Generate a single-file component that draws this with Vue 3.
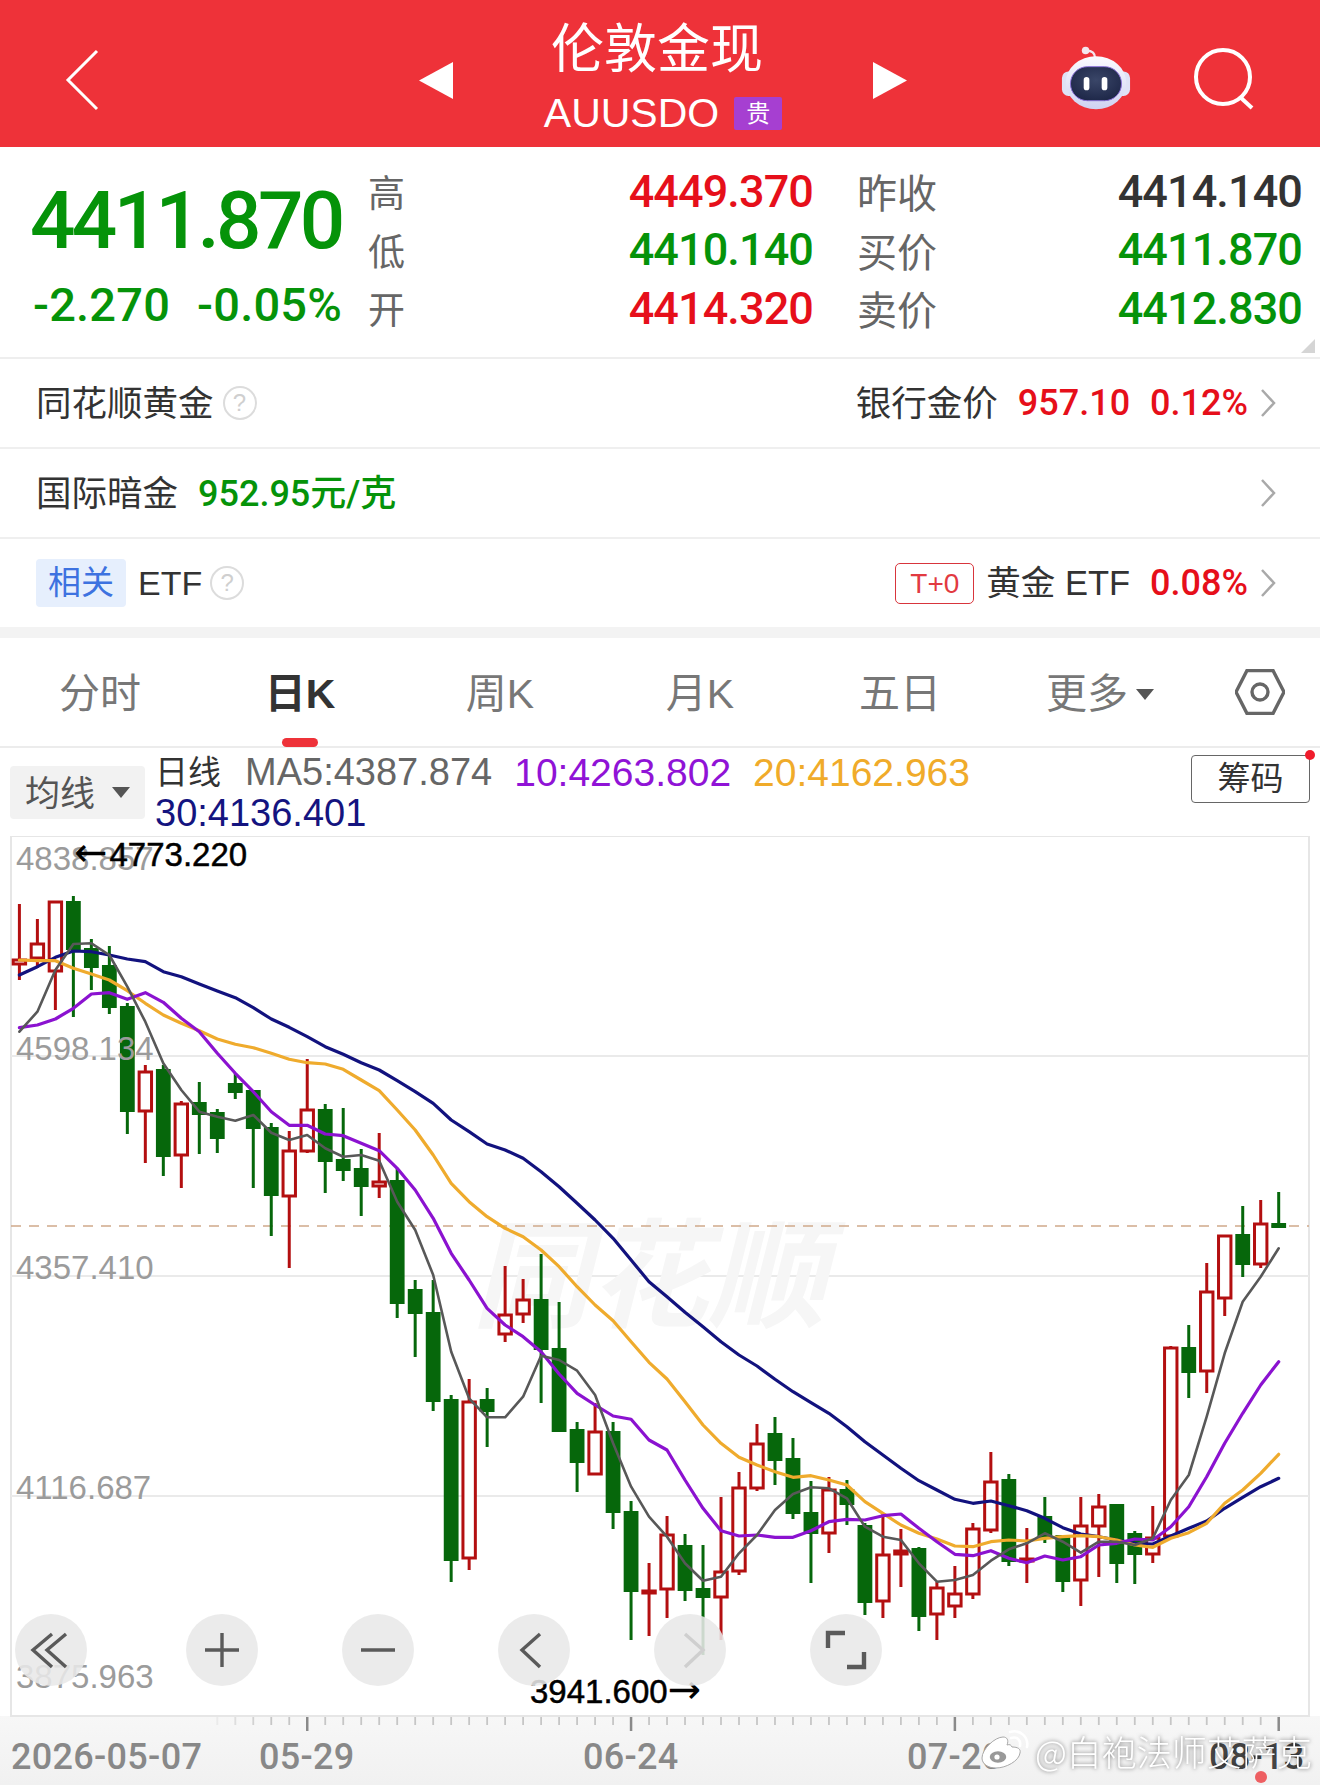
<script setup>
const X = i => 19.4 + i * 17.99
const r = 'r', g = 'g'
// [colour, high, bodyTop, bodyBottom, low]
const raw = [
  [r,904,959,965,980],[r,919,943,959,968],[r,901,901,972,1010],[g,896,901,950,1017],[g,939,948,968,990],[g,946,965,1008,1014],
  [g,1003,1006,1112,1134],[r,1065,1071,1112,1163],[g,1065,1069,1157,1176],[r,1101,1103,1156,1188],[g,1082,1102,1115,1154],[g,1109,1112,1139,1153],
  [g,1073,1083,1093,1099],[g,1090,1090,1129,1188],[g,1123,1127,1196,1236],[r,1131,1150,1197,1268],[r,1059,1109,1152,1153],[g,1104,1109,1162,1193],
  [g,1108,1159,1171,1181],[g,1149,1168,1187,1216],[r,1133,1181,1187,1198],[g,1168,1180,1304,1318],[g,1280,1289,1314,1357],[g,1280,1312,1402,1411],
  [g,1395,1399,1561,1582],[r,1379,1401,1559,1570],[g,1388,1399,1412,1447],[r,1266,1314,1335,1342],[r,1279,1299,1315,1323],[g,1254,1299,1350,1403],
  [g,1302,1348,1432,1432],[g,1422,1429,1463,1492],[r,1403,1431,1475,1475],[g,1422,1431,1513,1529],[g,1501,1511,1592,1640],[r,1563,1590,1593,1636],
  [r,1516,1534,1590,1618],[g,1534,1545,1591,1601],[g,1545,1588,1598,1655],[r,1497,1571,1598,1640],[r,1472,1487,1572,1575],[r,1424,1443,1489,1491],
  [g,1417,1433,1461,1485],[g,1438,1458,1514,1519],[g,1481,1512,1534,1583],[r,1477,1489,1534,1553],[g,1480,1489,1505,1525],[g,1523,1525,1603,1615],
  [r,1513,1554,1602,1618],[r,1529,1550,1555,1587],[g,1547,1548,1617,1631],[r,1582,1587,1615,1640],[r,1566,1593,1607,1618],[r,1523,1528,1595,1599],
  [r,1452,1481,1531,1533],[g,1474,1479,1562,1566],[r,1528,1558,1561,1583],[g,1497,1516,1538,1543],[g,1535,1535,1582,1592],[r,1497,1525,1581,1606],
  [r,1494,1506,1527,1577],[g,1504,1504,1564,1583],[g,1531,1533,1555,1584],[r,1506,1537,1555,1563],[r,1346,1347,1537,1537],[g,1325,1347,1373,1398],
  [r,1263,1291,1372,1393],[r,1235,1235,1299,1316],[g,1206,1234,1265,1277],[r,1200,1223,1265,1268],[g,1192,1223,1228,1228]
]
const candles = raw.map((c, i) => ({ x: X(i), up: c[0] === r, high: c[1], top: c[2], bottom: c[3], low: c[4] }))

const toPts = arr => arr.map((y, i) => `${X(i).toFixed(1)},${y.toFixed(1)}`).join(' ')
const z3 = a => a.map(v => 840 + v / 3)
const z5 = a => a.map(v => 1300 + v / 3)
const z4 = a => a.map(v => 1140 + v / 3)

const ma5 = toPts([
  ...z3([575,515,390,312,310,345,440,545,670,750,815,830,842,825,878,900,885,925,950,945,962,1085,1170,1305]),
  ...z5([155,295,352,352,290,167,180,212,285,430,560,650]),
  ...z4([1190,1270,1322,1310,1240,1185,1110,1062,1042,1045,1075,1160,1190,1200,1270,1325,1320,1305,1262,1228,1210,1180,1205,1238,1205,1205,1215,1195,1080,1005,830,640,485,410,325])
])
const ma10 = toPts([
  ...z3([563,555,537,505,462,458,478,458,487,535,575,640,700,755,815,856,856,882,887,910,932,985,1050,1135,1240,1320,1405]),
  ...z5([75,110,155,222,280,315,348,358,420]),
  ...z4([930,1020,1105,1172,1188,1185,1192,1192,1172,1145,1138,1140,1127,1122,1165,1205,1243,1247,1232,1255,1268,1248,1260,1250,1215,1210,1197,1200,1160,1100,1010,910,820,735,665])
])
const ma20 = toPts([
  ...z3([360,362,362,385,402,420,452,490,525,550,572,597,613,623,640,658,668,672,688,720,752,810,870,945,1030,1085,1130,1165,1190,1230,1280,1340,1395]),
  ...z5([62,125,187]),
  ...z4([717,785,855,910,952,975,995,1012,1007,1020,1035,1085,1120,1155,1180,1197,1218,1220,1205,1200,1203,1195,1190,1187,1190,1200,1215,1222,1195,1178,1150,1090,1050,1000,943])
])
const ma30 = toPts([
  ...z3([405,380,352,333,335,345,357,365,395,410,432,453,473,503,537,562,590,620,643,668,690,722,755,790,840,875,912,930,955,995,1040,1090,1140,1195,1260,1325]),
  ...z4([470,517,560,605,645,678,718,755,788,820,860,905,945,985,1022,1050,1078,1090,1083,1097,1112,1135,1163,1182,1190,1200,1210,1212,1188,1165,1143,1105,1072,1040,1015])
])

const axisY = [
  { t: '4838.857', y: 870 },
  { t: '4598.134', y: 1060 },
  { t: '4357.410', y: 1279 },
  { t: '4116.687', y: 1499 },
  { t: '3875.963', y: 1688 }
]
const gridY = [1056, 1276, 1496]
const ticks = raw.map((c, i) => ({ x: X(i), big: i % 18 === 16, o: i < 11 ? 0 : i < 14 ? (i - 10) / 4 : 1 }))
const rounds = [51, 222, 378, 534, 690, 846]
const tabs = ['分时', '日K', '周K', '月K', '五日']
</script>

<template>
  <div class="page">
    <header class="hdr">
      <svg class="back" viewBox="0 0 34 62"><polyline points="32,2 3,31 32,60" /></svg>
      <svg class="tri tri-l" viewBox="0 0 34 37"><polygon points="34,0 34,37 0,18.5" /></svg>
      <div class="title">
        <div class="name">伦敦金现</div>
        <div class="sub"><span>AUUSDO</span><em>贵</em></div>
      </div>
      <svg class="tri" viewBox="0 0 34 37"><polygon points="0,0 0,37 34,18.5" /></svg>
      <svg class="robot" viewBox="0 0 74 66">
        <defs>
          <linearGradient id="rb" x1="0" y1="0" x2="0" y2="1">
            <stop offset="0" stop-color="#fbfbff" /><stop offset="1" stop-color="#cfd2f2" />
          </linearGradient>
          <radialGradient id="rf" cx=".5" cy=".4" r=".7">
            <stop offset="0" stop-color="#3a4668" /><stop offset="1" stop-color="#1a2344" />
          </radialGradient>
        </defs>
        <path class="ant" d="M36 12 C36 6 33 4 27 4" />
        <circle cx="26" cy="4" r="4" fill="#f4e6ee" />
        <rect x="1" y="26" width="72" height="26" rx="7" fill="#dfe2f6" />
        <ellipse cx="37" cy="38" rx="32" ry="28" fill="url(#rb)" />
        <rect x="10" y="21" width="54" height="36" rx="18" fill="url(#rf)" stroke="#8a6fd8" stroke-width="1" />
        <rect x="24" y="32" width="6" height="14" rx="3" fill="#fff" />
        <rect x="43" y="32" width="6" height="14" rx="3" fill="#fff" />
      </svg>
      <svg class="search" viewBox="0 0 64 64"><circle cx="30" cy="30" r="27" /><line x1="47" y1="50" x2="59" y2="61" /></svg>
    </header>

    <section class="quote">
      <div class="q-left">
        <div class="price">4411.870</div>
        <div class="chg"><span>-2.270</span><span>-0.05%</span></div>
      </div>
      <div class="q-grid">
        <span class="lb">高</span><span class="v red">4449.370</span><span class="lb lb2">昨收</span><span class="v dark">4414.140</span>
        <span class="lb">低</span><span class="v green">4410.140</span><span class="lb lb2">买价</span><span class="v green">4411.870</span>
        <span class="lb">开</span><span class="v red">4414.320</span><span class="lb lb2">卖价</span><span class="v green">4412.830</span>
      </div>
      <i class="corner"></i>
    </section>

    <div class="row">
      <span class="cn">同花顺黄金</span><b class="q">?</b>
      <span class="right cn">银行金价</span><span class="num red n1">957.10</span><span class="num red n2">0.12%</span>
      <svg class="chev" viewBox="0 0 16 30"><polyline points="2,2 14,15 2,28" /></svg>
    </div>
    <div class="row">
      <span class="cn">国际暗金</span><span class="num green n3">952.95元/克</span>
      <svg class="chev right" viewBox="0 0 16 30"><polyline points="2,2 14,15 2,28" /></svg>
    </div>
    <div class="row last">
      <span class="tag">相关</span><span class="etf">ETF</span><b class="q q2">?</b>
      <span class="right t0">T+0</span><span class="gold cn">黄金 ETF</span><span class="num red n2 n4">0.08%</span>
      <svg class="chev" viewBox="0 0 16 30"><polyline points="2,2 14,15 2,28" /></svg>
    </div>
    <div class="band"></div>

    <nav class="tabs">
      <span v-for="(t, i) in tabs" :key="t" class="tab" :class="{ active: i === 1 }">{{ t }}</span>
      <span class="tab">更多<i class="more"></i></span>
      <span class="gear">
        <svg viewBox="0 0 50 46"><polygon points="12,1.5 38,1.5 49,23 38,44.5 12,44.5 1,23" /><circle cx="25" cy="23" r="8" /></svg>
      </span>
    </nav>

    <div class="info">
      <div class="ma-btn">均线<i></i></div>
      <div class="ma-text">
        <span class="t1">日线</span>
        <span class="c5">MA5:4387.874</span>
        <span class="c10">10:4263.802</span>
        <span class="c20">20:4162.963</span>
        <span class="c30">30:4136.401</span>
      </div>
      <div class="chip">筹码<i></i></div>
    </div>

    <svg class="chart" viewBox="0 836 1320 949">
      <defs>
        <linearGradient id="axbg" x1="0" y1="0" x2="0" y2="1">
          <stop offset="0" stop-color="#f7f7f7" /><stop offset="1" stop-color="#f1f1f1" />
        </linearGradient>
      </defs>
      <rect x="0" y="1716" width="1320" height="69" fill="url(#axbg)" />
      <rect x="11" y="836" width="1298" height="880" fill="#fff" stroke="#e6e6e6" stroke-width="2" />
      <line v-for="y in gridY" :key="y" x1="11" x2="1309" :y1="y" :y2="y" stroke="#eaeaea" stroke-width="2" />
      <text x="472" y="1318" class="wm">同花顺</text>
      <line x1="11" x2="1309" y1="1226" y2="1226" stroke="#cfa98a" stroke-width="1.5" stroke-dasharray="10 8" />

      <g v-for="(c, i) in candles" :key="i">
        <line :x1="c.x" :x2="c.x" :y1="c.high" :y2="c.low" :stroke="c.up ? '#b30f10' : '#06670b'" stroke-width="3" />
        <rect v-if="c.up" :x="c.x - 6.2" :y="c.top + 1" width="12.4" :height="Math.max(c.bottom - c.top - 2, 2)" fill="#fff" stroke="#b30f10" stroke-width="3" />
        <rect v-else :x="c.x - 7.4" :y="c.top" width="14.8" :height="Math.max(c.bottom - c.top, 3)" fill="#06670b" />
      </g>

      <polyline :points="ma30" class="ln" stroke="#12127e" stroke-width="3.2" />
      <polyline :points="ma20" class="ln" stroke="#efab2d" stroke-width="3.2" />
      <polyline :points="ma10" class="ln" stroke="#8b12d0" stroke-width="3.2" />
      <polyline :points="ma5" class="ln" stroke="#585858" stroke-width="2.6" />

      <text v-for="a in axisY" :key="a.t" x="16" :y="a.y" class="axis">{{ a.t }}</text>
      <text x="74" y="866" class="flag"><tspan class="arrow">←</tspan><tspan dx="2">4773.220</tspan></text>
      <text x="530" y="1703" class="flag">3941.600<tspan class="arrow">→</tspan></text>

      <circle v-for="x in rounds" :key="x" :cx="x" cy="1650" r="36" fill="#e8e8e8" fill-opacity=".88" />
      <g class="ic">
        <polyline points="52,1634 33,1650 52,1667" /><polyline points="66,1634 47,1650 66,1667" />
        <path d="M205 1650H239M222 1633V1667" />
        <path d="M361 1650H395" />
        <polyline points="540,1634 522,1650 540,1667" />
        <polyline class="dim" points="685,1634 703,1650 685,1667" />
        <polyline class="thick" points="845,1633 828,1633 828,1648" />
        <polyline class="thick" points="847,1667 864,1667 864,1652" />
      </g>

      <line v-for="t in ticks" :key="t.x" :x1="t.x" :x2="t.x" y1="1717" :y2="t.big ? 1731 : 1725"
        :stroke="t.big ? '#8a8a8a' : '#c6c6c6'" :stroke-opacity="t.o" :stroke-width="t.big ? 2.5 : 1.8" />

      <text x="11" y="1769" class="date">2026-05-07</text>
      <text x="259" y="1769" class="date">05-29</text>
      <text x="583" y="1769" class="date">06-24</text>
      <text x="907" y="1769" class="date">07-20</text>
      <text x="1209" y="1769" class="date dk">08-13</text>
      <circle cx="1261" cy="1777" r="6" fill="#ee5f62" />

      <g class="weibo">
        <path d="M1012 1747c6 0 9 2 8 6-1 8-14 15-24 15-8 0-14-4-14-10 0-9 13-21 21-21 4 0 6 3 4 8 3-1 4 0 5 2z" fill="#fff" stroke="#a8a8a8" stroke-width="1" />
        <ellipse cx="998" cy="1757" rx="9" ry="6.5" fill="#999" stroke="#fff" stroke-width="1.5" />
        <circle cx="997" cy="1757" r="2.6" fill="#fff" />
        <path d="M1011 1738c6-2 10 2 9 8M1010 1732c10-3 19 5 17 15" fill="none" stroke="#fff" stroke-width="2.6" stroke-linecap="round" />
      </g>
      <text x="1035" y="1766" class="mark">@白袍法师艾萨克</text>
    </svg>
  </div>
</template>

<style>
html, body { margin: 0; background: #fff; }
</style>

<style scoped>
.page {
  width: 1320px;
  height: 1785px;
  overflow: hidden;
  background: #fff;
  font-family: "Liberation Sans", "Noto Sans CJK SC", sans-serif;
  color: #333;
}
.hdr {
  height: 147px;
  background: #ee3239;
  display: flex;
  align-items: center;
  color: #fff;
}
.back { width: 34px; height: 62px; margin: 12px 0 0 65px; }
.back polyline { fill: none; stroke: #fff; stroke-width: 3; }
.tri { width: 34px; height: 37px; fill: #fff; margin-top: 14px; }
.tri-l { margin-left: 320px; }
.title { width: 420px; display: flex; flex-direction: column; align-items: center; }
.name { font-size: 53px; line-height: 64px; font-weight: 400; padding-right: 12px; margin-top: 10px; }
.sub { display: flex; align-items: center; height: 52px; font-size: 41px; margin-top: 5px; }
.sub em {
  font-style: normal;
  width: 48px;
  height: 33px;
  line-height: 33px;
  margin-left: 15px;
  font-size: 24px;
  text-align: center;
  background: #a63fd1;
  border-radius: 2px;
}
.robot { width: 70px; height: 66px; margin: 8px 0 0 154px; }
.ant { fill: none; stroke: #f4e6ee; stroke-width: 2.5; }
.search { width: 64px; height: 64px; margin: 10px 0 0 62px; fill: none; stroke: #fff; stroke-width: 4; }

.quote {
  position: relative;
  height: 212px;
  box-sizing: border-box;
  border-bottom: 2px solid #eeeeee;
  padding-top: 15px;
  display: flex;
}
.q-left { width: 368px; box-sizing: border-box; padding-left: 30px; color: #059309; font-family: Roboto, "Liberation Sans", sans-serif; }
.price { font-size: 80px; line-height: 80px; font-weight: 500; letter-spacing: -3.6px; margin-top: 19px; }
.chg { display: flex; gap: 27px; padding-left: 3px; font-size: 47px; line-height: 50px; font-weight: 500; letter-spacing: .2px; margin-top: 19px; }
.q-grid {
  display: grid;
  grid-template-columns: 60px 385px 188px 301px;
  grid-auto-rows: 58.5px;
  align-items: center;
}
.lb { font-size: 37px; color: #666; }
.lb2 { font-size: 40px; padding-left: 44px; }
.v { font-family: Roboto, "Liberation Sans", sans-serif; font-size: 45px; font-weight: 500; text-align: right; letter-spacing: -.9px; }
.red { color: #e60f1a; }
.green { color: #059309; }
.dark { color: #333; }
.corner {
  position: absolute;
  right: 5px;
  bottom: 4px;
  width: 0;
  height: 0;
  border-left: 14px solid transparent;
  border-bottom: 14px solid #d5d5d5;
}

.row {
  height: 90px;
  box-sizing: border-box;
  border-bottom: 2px solid #efefef;
  padding: 0 44px 0 36px;
  display: flex;
  align-items: center;
  font-size: 35.5px;
  color: #333;
}
.row.last { height: 88px; border-bottom: 0; }
.cn { margin-bottom: 6px; }
.right { margin-left: auto; }
.num { font-family: Roboto, "Liberation Sans", "Noto Sans CJK SC", sans-serif; font-weight: 500; font-size: 36px; }
.n1 { margin-left: 20px; }
.n2 { margin-left: 20px; }
.n3 { margin-left: 20px; margin-bottom: 6px; }
.n4 { margin-left: 20px; }
.q {
  width: 30px;
  height: 30px;
  margin-left: 9px;
  border: 2.5px solid #dcdcdc;
  border-radius: 50%;
  color: #cfcfcf;
  font-size: 24px;
  line-height: 30px;
  font-weight: 400;
  text-align: center;
}
.q2 { margin-left: 8px; }
.chev { width: 16px; height: 30px; margin-left: 12px; fill: none; stroke: #a9a9a9; stroke-width: 2.5; }
.chev.right { margin-left: auto; }
.tag {
  width: 90px;
  height: 48px;
  line-height: 48px;
  text-align: center;
  border-radius: 4px;
  background: #e6effd;
  color: #3d72e0;
  font-size: 33px;
}
.etf { margin-left: 12px; font-size: 34px; }
.t0 {
  width: 77px;
  height: 39px;
  line-height: 39px;
  border: 1px solid #d8353c;
  border-radius: 5px;
  color: #e23a41;
  font-size: 28px;
  text-align: center;
}
.gold { margin-left: 12px; font-size: 34.5px; }
.band { height: 11px; background: #f3f3f3; }

.tabs {
  height: 110px;
  box-sizing: border-box;
  border-bottom: 2px solid #ececec;
  display: flex;
  align-items: center;
  font-size: 41px;
  color: #777;
}
.tab { position: relative; width: 200px; text-align: center; line-height: 113px; height: 108px; }
.tab.active { color: #333; font-weight: 700; }
.tab.active::after {
  content: "";
  position: absolute;
  left: 82px;
  bottom: -1px;
  width: 36px;
  height: 9px;
  border-radius: 5px;
  background: #ee3239;
}
.more {
  display: inline-block;
  margin-left: 8px;
  border-left: 9px solid transparent;
  border-right: 9px solid transparent;
  border-top: 11px solid #555;
  vertical-align: 8px;
}
.gear { width: 120px; display: flex; justify-content: center; }
.gear svg { width: 50px; height: 46px; fill: none; stroke: #666; stroke-width: 3.4; }

.info { height: 88px; display: flex; align-items: flex-start; }
.ma-btn {
  width: 135px;
  height: 53px;
  box-sizing: border-box;
  margin: 18px 0 0 10px;
  padding-left: 15px;
  padding-bottom: 5px;
  display: flex;
  align-items: center;
  border-radius: 4px;
  background: #f2f2f2;
  color: #555;
  font-size: 35px;
}
.ma-btn i {
  margin: 5px 0 0 17px;
  border-left: 9px solid transparent;
  border-right: 9px solid transparent;
  border-top: 11px solid #555;
}
.ma-text {
  width: 840px;
  margin: 4px 0 0 10px;
  display: flex;
  flex-wrap: wrap;
  column-gap: 22px;
  font-size: 38px;
  line-height: 41px;
}
.t1 { color: #333; font-size: 33px; margin-right: 2px; }
.c5 { color: #666; }
.c10 { color: #9013d6; font-size: 39px; }
.c20 { color: #f0ab2a; font-size: 39px; }
.c30 { color: #14147f; }
.chip {
  position: relative;
  width: 117px;
  height: 46px;
  margin: 7px 10px 0 auto;
  line-height: 46px;
  border: 1.5px solid #666;
  border-radius: 4px;
  text-align: center;
  font-size: 33px;
  color: #333;
}
.chip i {
  position: absolute;
  right: -6px;
  top: -6px;
  width: 10px;
  height: 10px;
  border-radius: 50%;
  background: #f01c2c;
}

.chart { display: block; width: 1320px; height: 949px; }
.ln { fill: none; stroke-linejoin: round; stroke-linecap: round; }
.axis { font-size: 33px; fill: #9b9b9b; font-family: "Liberation Sans", sans-serif; }
.flag { font-size: 33px; fill: #000; stroke: #000; stroke-width: .5px; font-family: "Liberation Sans", sans-serif; }
.arrow { font-family: "DejaVu Sans", sans-serif; font-size: 40px; stroke-width: 0; }
.wm { font-size: 118px; font-style: italic; font-weight: 700; fill: #f6f6f6; font-family: "Noto Sans CJK SC", sans-serif; }
.ic polyline, .ic path { fill: none; stroke: #5a5a5a; stroke-width: 3.4; }
.ic .dim { stroke: #cfcfcf; }
.ic .thick { stroke-width: 4.4; }
.date { font-size: 36px; fill: #888; font-weight: 500; letter-spacing: .3px; font-family: Roboto, sans-serif; }
.date.dk { fill: #444; }
.mark {
  font-size: 35px;
  fill: #fff;
  paint-order: stroke;
  font-family: "Noto Sans CJK SC", sans-serif;
  font-weight: 300;
  filter: drop-shadow(0 0 2px rgba(0,0,0,.55));
}
</style>
